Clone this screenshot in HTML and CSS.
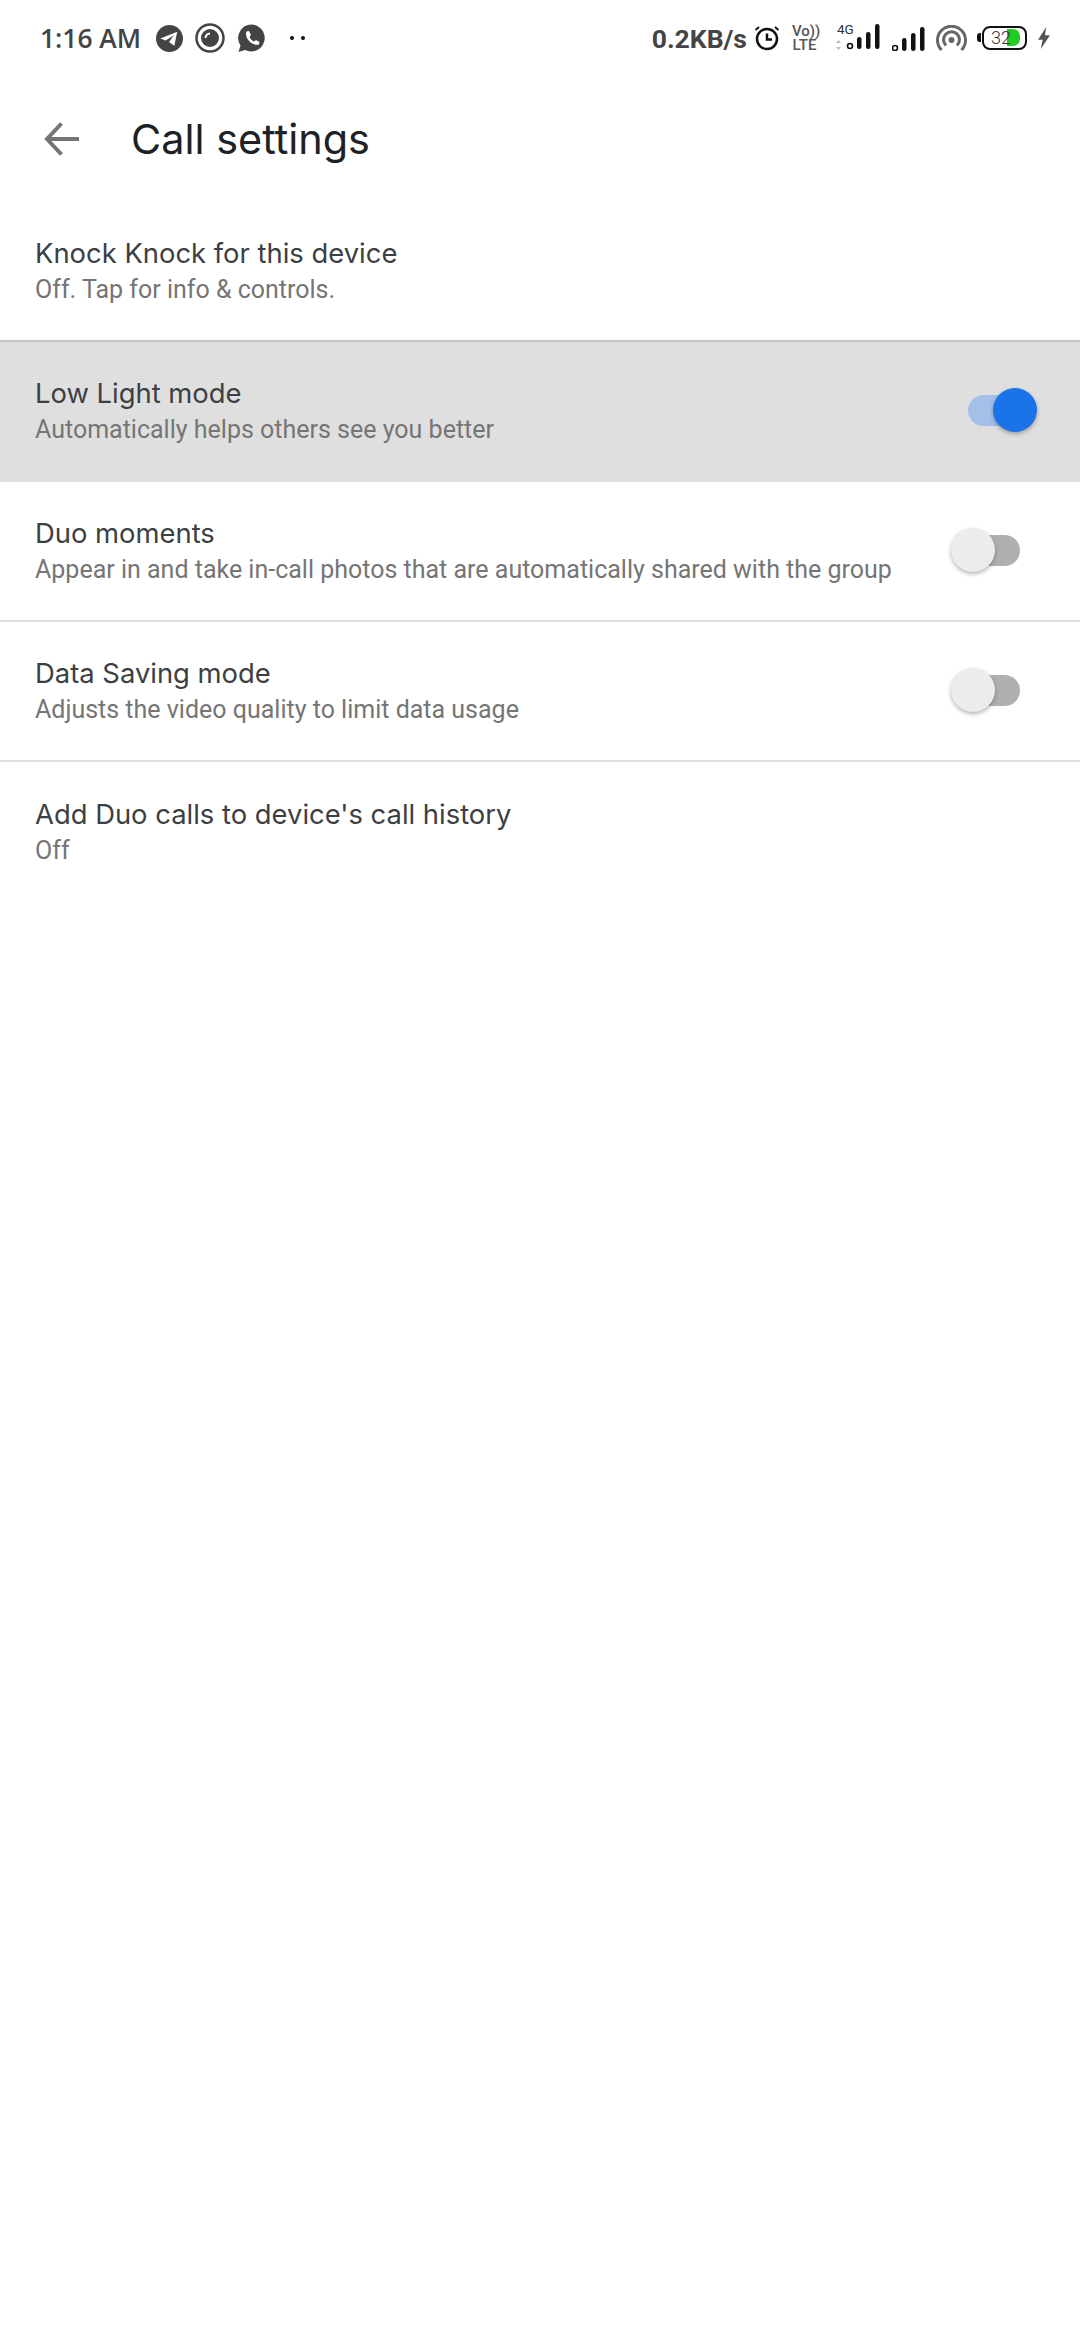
FILE: index.html
```html
<!doctype html>
<html>
<head>
<meta charset="utf-8">
<title>Call settings</title>
<link rel="stylesheet" href="styles.css">
</head>
<body>

<div class="statusbar">
  <div class="status-left">
    <span class="clock">1:16 AM</span>
    <svg class="notif" width="27" height="27" viewBox="0 0 28 28"><circle cx="14" cy="14" r="14" fill="#444"/><path d="M4.500 14 L22 7 L19 21.500 L13.500 17.500 L18.500 10.500 L10 16 Z" fill="#fff"/></svg>
    <svg class="notif" width="30" height="30" viewBox="0 0 30 30"><circle cx="15" cy="15" r="13.500" fill="none" stroke="#444" stroke-width="2.500"/><circle cx="15" cy="15" r="9" fill="#444"/><path d="M10.500 15 A4.500 4.500 0 0 1 15 10.500" fill="none" stroke="#fff" stroke-width="2"/></svg>
    <svg class="notif" width="28" height="28" viewBox="0 0 28 28"><path d="M14.500 0.500 A13.500 13.500 0 1 1 8 26 L1.500 28 L3.500 21.500 A13.500 13.500 0 0 1 14.500 0.500 Z" fill="#444"/><path d="M9.500 7.500 L12 7 L14 11 L12.500 13 C13.500 15 15 16.500 17 17.500 L19 16 L22.500 18 L22 20.500 C15.500 22.500 7 14 9.500 7.500 Z" fill="#fff"/></svg>
    <span class="dots"><i></i><i></i></span>
  </div>
  <div class="status-right">
    <span class="speed">0.2KB/s</span>
    <svg class="alarm" width="26" height="26" viewBox="0 0 26 26"><circle cx="13" cy="14" r="10" fill="none" stroke="#111" stroke-width="2.500"/><path d="M13 8.500 V14.500 H18" fill="none" stroke="#111" stroke-width="2.500"/><path d="M1.500 5 L5 2 M24.500 5 L21 2" stroke="#111" stroke-width="2"/></svg>
    <span class="volte">Vo))<br>LTE</span>
    <div class="sim-one">
      <span class="net-type">4G</span>
      <svg width="46" height="30" viewBox="0 0 46 30">
        <path d="M1 20 L3.500 17 L6 20 Z M1 24 L6 24 L3.500 27 Z" fill="#bbb"/>
        <circle cx="15" cy="23" r="2.500" fill="none" stroke="#111" stroke-width="1.600"/>
        <rect class="bar" x="22" y="14" width="4.500" height="12" rx="2.200"/>
        <rect class="bar" x="31" y="9" width="4.500" height="17" rx="2.200"/>
        <rect class="bar" x="40" y="1" width="4.500" height="25" rx="2.200"/>
      </svg>
    </div>
    <svg class="sim-two" width="33" height="26" viewBox="0 0 33 26">
      <circle cx="3" cy="23" r="2.500" fill="none" stroke="#111" stroke-width="1.600"/>
      <rect class="bar" x="10" y="13" width="4.500" height="13" rx="2.200"/>
      <rect class="bar" x="19" y="8" width="4.500" height="18" rx="2.200"/>
      <rect class="bar" x="28" y="2" width="4.500" height="24" rx="2.200"/>
    </svg>
    <svg class="hotspot" width="31" height="27" viewBox="0 0 31 27" fill="none" stroke="#666" stroke-width="3">
      <path d="M5.500 25 A14 14 0 1 1 25.500 25"/>
      <path d="M10 20.500 A8 8 0 1 1 21 20.500"/>
      <circle cx="15.500" cy="15" r="3" fill="#666" stroke="none"/>
    </svg>
    <div class="battery">
      <span class="battery-cap"></span>
      <span class="battery-fill"></span>
      <span class="battery-num">32</span>
    </div>
    <svg class="bolt" width="14" height="22" viewBox="0 0 15 24"><path d="M10 0 L1 14 H6 L4 24 L14 9 H8.500 Z" fill="#555"/></svg>
  </div>
</div>

<div class="appbar">
  <svg class="back" width="36" height="34" viewBox="0 0 36 34"><path d="M17.500 1.500 L3 17 L17.500 32.500 M3 17 H35" fill="none" stroke="#757575" stroke-width="4"/></svg>
  <h1>Call settings</h1>
</div>

<ul class="settings">
  <li class="row">
    <div class="row-text">
      <div class="row-title">Knock Knock for this device</div>
      <div class="row-sub">Off. Tap for info &amp; controls.</div>
    </div>
  </li>
  <li class="row pressed">
    <div class="row-text">
      <div class="row-title">Low Light mode</div>
      <div class="row-sub">Automatically helps others see you better</div>
    </div>
    <div class="switch on"><span class="track"></span><span class="thumb"></span></div>
  </li>
  <li class="row">
    <div class="row-text">
      <div class="row-title">Duo moments</div>
      <div class="row-sub">Appear in and take in-call photos that are automatically shared with the group</div>
    </div>
    <div class="switch"><span class="track"></span><span class="thumb"></span></div>
  </li>
  <li class="row">
    <div class="row-text">
      <div class="row-title">Data Saving mode</div>
      <div class="row-sub">Adjusts the video quality to limit data usage</div>
    </div>
    <div class="switch"><span class="track"></span><span class="thumb"></span></div>
  </li>
  <li class="row">
    <div class="row-text">
      <div class="row-title">Add Duo calls to device's call history</div>
      <div class="row-sub">Off</div>
    </div>
  </li>
</ul>

</body>
</html>
```

FILE: styles.css
```css
html, body {
  margin: 0;
  padding: 0;
  background: #fff;
}
body {
  width: 1080px;
  height: 2340px;
  overflow: hidden;
  font-family: Roboto, sans-serif;
}

/* status bar */
.statusbar {
  height: 76px;
  display: flex;
  justify-content: space-between;
  align-items: center;
  padding: 0 29px 0 40px;
}
.status-left, .status-right {
  display: flex;
  align-items: center;
}
.clock {
  font-family: "Open Sans", sans-serif;
  font-weight: 600;
  font-size: 26.4px;
  color: #444;
  width: 116px;
}
.notif { margin-right: 12px; }
.dots {
  display: flex;
  gap: 7px;
  margin-left: 13px;
}
.dots i {
  width: 4px;
  height: 4px;
  border-radius: 50%;
  background: #111;
}
.speed {
  font-weight: 700;
  font-size: 26.5px;
  color: #444;
  margin-right: 7px;
}
.alarm { margin-right: 12px; }
.volte {
  font-size: 15px;
  line-height: 14px;
  font-weight: 500;
  color: #555;
  width: 25px;
  text-align: center;
  margin-right: 18px;
}
.bar { fill: #111; }
.sim-one {
  display: flex;
  flex-direction: column;
  margin: 0 11px 0 0;
}
.net-type {
  font-size: 13.5px;
  line-height: 12px;
  color: #333;
  margin: 0 0 -12px 2px;
}
.sim-two { margin-right: 11px; }
.hotspot { margin-right: 15px; }
.battery {
  position: relative;
  box-sizing: border-box;
  width: 45px;
  height: 24px;
  border: 2.5px solid #111;
  border-radius: 8px;
  margin-right: 10px;
}
.battery-cap {
  position: absolute;
  left: -7px;
  top: 5px;
  width: 4px;
  height: 9px;
  background: #111;
  border-radius: 3px 0 0 3px;
}
.battery-fill {
  position: absolute;
  left: 23px;
  top: 1px;
  width: 13px;
  height: 17px;
  background: #22cc22;
  border-radius: 0 7px 7px 0;
}
.battery-num {
  position: absolute;
  left: 7px;
  top: 0;
  font-size: 18px;
  font-weight: 300;
  line-height: 19px;
  color: #333;
}

/* app bar */
.appbar {
  height: 126px;
  display: flex;
  align-items: center;
  padding-left: 44px;
}
.back { margin-right: 51px; }
.appbar h1 {
  margin: 0;
  font-family: Inter, sans-serif;
  font-weight: 400;
  font-size: 41.4px;
  color: #202124;
}

/* list */
.settings {
  list-style: none;
  margin: 0;
  padding: 0;
}
.row {
  height: 140px;
  box-sizing: border-box;
  display: flex;
  align-items: center;
  justify-content: space-between;
  padding: 0 60px 0 35px;
  border-bottom: 2px solid #e0e0e0;
}
.row:last-child { border-bottom: 0; }
.row:first-child { border-bottom-color: #c4c4c4; }
.row.pressed {
  background: #dfdfdf;
  border-bottom-color: #dfdfdf;
}
.row-title {
  font-family: Inter, sans-serif;
  font-size: 27.4px;
  line-height: 37px;
  color: #3c4043;
}
.row-sub {
  font-size: 25px;
  line-height: 36px;
  color: #757575;
}

.switch {
  position: relative;
  width: 52px;
  height: 44px;
  margin-top: -3px;
}
.track {
  position: absolute;
  left: 0;
  right: 0;
  top: 7px;
  height: 31px;
  border-radius: 16px;
  background: #b0b0b0;
}
.thumb {
  position: absolute;
  left: -17px;
  top: 0;
  width: 44px;
  height: 44px;
  border-radius: 50%;
  background: #ececec;
  box-shadow: 0 2px 4px rgba(0,0,0,.3);
}
.switch.on .track { background: #a5c0e8; }
.switch.on .thumb {
  left: 25px;
  background: #1a73e8;
}
```
